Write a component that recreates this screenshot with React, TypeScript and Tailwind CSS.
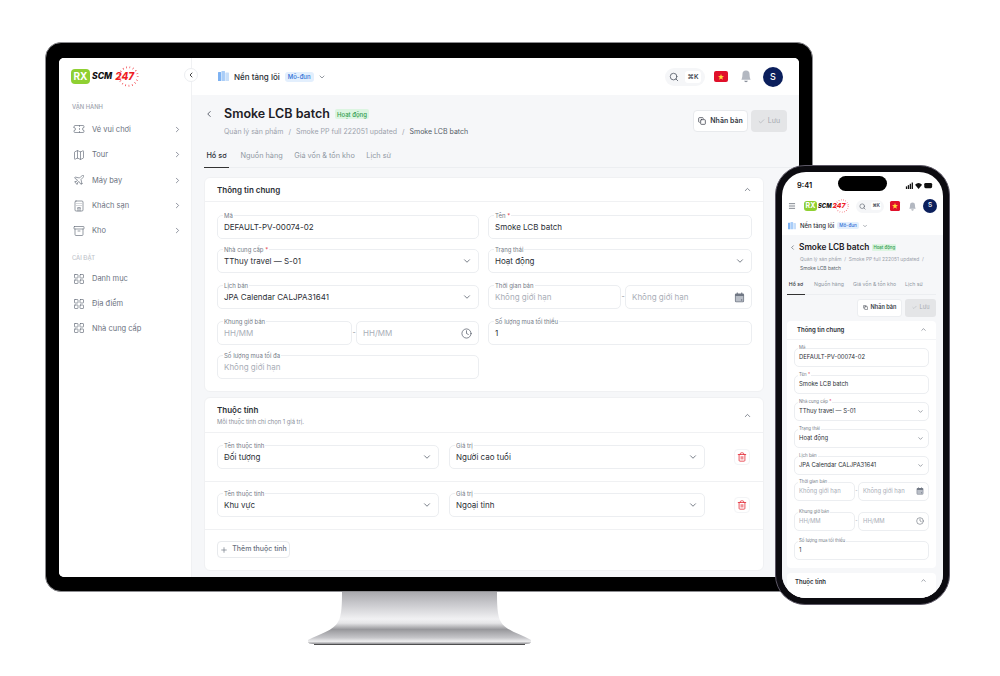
import { Archive, Check, ChevronDown, ChevronLeft, ChevronRight, ChevronUp, Clock, Copy, Hotel, LayoutGrid, Map, Menu, Plane, Plus, Search, Ticket, Trash2 } from "lucide-react";
import type { ReactNode } from "react";

const FONT = "font-['Inter','Liberation_Sans',sans-serif]";

function Logo({ small }: { small?: boolean }) {
  return (
    <div className={small ? "relative flex w-[43px] items-center gap-[1px]" : "relative flex w-[67px] items-center gap-[2px]"}>
      <span className={small ? "flex h-[10px] w-[13px] items-center justify-center rounded-[3px] bg-[#8fd032] text-[7px] font-bold text-white" : "flex h-[15px] w-[19px] items-center justify-center rounded-[4px] bg-[#8fd032] text-[10px] font-bold text-white"}>RX</span>
      <span className={small ? "text-[5.8px] font-extrabold italic text-[#111]" : "text-[8.6px] font-extrabold italic text-[#111]"}>SCM</span>
      <span className={small ? "text-[6.8px] font-extrabold italic text-[#ee1c25]" : "ml-[1px] text-[10px] font-extrabold italic text-[#ee1c25]"}>247</span>
      <svg viewBox="0 0 20 20" className={small ? "absolute right-[-2px] top-[-2px] h-[14px] w-[14px]" : "absolute right-[-1px] top-[-3px] h-[21px] w-[21px]"}>
        <circle cx="10" cy="10" r="8.8" fill="none" stroke="#ee1c25" strokeWidth="1.8" strokeDasharray="0.55 2.7" />
      </svg>
    </div>
  );
}

function Flag({ small }: { small?: boolean }) {
  return (
    <span className={small ? "flex h-[10px] w-[10px] items-center justify-center rounded-[1.5px] bg-[#e0102a]" : "flex h-[11px] w-[14px] items-center justify-center rounded-[2px] bg-[#e0102a]"}>
      <svg viewBox="0 0 10 10" className="h-[6px] w-[6px]"><path d="M5 0l1.3 3.4 3.7.2-2.9 2.3 1 3.6L5 7.5 1.9 9.5l1-3.6L0 3.6l3.7-.2z" fill="#ffd83a" /></svg>
    </span>
  );
}

function Bell({ className }: { className: string }) {
  return (
    <svg viewBox="0 0 18 24" className={className}>
      <path d="M9 1a6.5 6.5 0 0 0-6.5 6.5C2.5 15 0.5 18 0.5 18h17s-2-3-2-10.5A6.5 6.5 0 0 0 9 1z" fill="#b3b8c1" />
      <path d="M5.5 20a3.6 3.6 0 0 0 7 0z" fill="#8b919c" />
    </svg>
  );
}

function Folder({ className }: { className: string }) {
  return (
    <svg viewBox="0 0 12 12" className={className}>
      <rect x="0" y="1" width="3.4" height="10" rx="0.6" fill="#7eb2f2" />
      <rect x="3.8" y="0" width="3.8" height="11" rx="0.6" fill="#a9cdf8" />
      <rect x="8" y="1.5" width="4" height="9.5" rx="0.6" fill="#c7def9" />
    </svg>
  );
}

function CalendarFill({ className }: { className: string }) {
  return (
    <svg viewBox="0 0 12 12" className={className}>
      <rect x="1" y="1.6" width="10" height="9.6" rx="1.4" fill="#707784" />
      <rect x="1.8" y="4.4" width="8.4" height="6" fill="#b9bec7" />
      <rect x="3" y="0.6" width="1.2" height="2" fill="#707784" />
      <rect x="7.8" y="0.6" width="1.2" height="2" fill="#707784" />
      <rect x="7.6" y="8" width="1.4" height="1.4" fill="#707784" />
    </svg>
  );
}

function Field(props: { label: string; value?: string; placeholder?: boolean; required?: boolean; select?: boolean; small?: boolean; className?: string; children?: ReactNode }) {
  const { label, value, placeholder, required, select, small, className, children } = props;
  return (
    <div className={`relative flex items-center justify-between rounded-[5px] border border-[#eceef1] bg-white ${small ? "h-[19px] px-[4px]" : "h-6 px-[6px]"} ${className ?? ""}`}>
      {label && (
        <span className={small ? "absolute left-[3px] top-[-3.5px] bg-white px-[1px] text-[4.4px] leading-[6px] text-[#737a86]" : "absolute left-[5px] top-[-4px] bg-white px-[1px] text-[6px] leading-[7px] text-[#737a86]"}>
          {label}
          {required && <span className="text-[#e5343f]"> *</span>}
        </span>
      )}
      {value && <span className={`${small ? "text-[5.9px]" : "text-[8px]"} ${placeholder ? "text-[#a9aeb7]" : "text-[#2b2f36]"}`}>{value}</span>}
      {select && <ChevronDown className={small ? "h-[7px] w-[7px] text-[#5f6672]" : "h-[10px] w-[10px] text-[#5f6672]"} strokeWidth={2} />}
      {children}
    </div>
  );
}

function NavItem({ icon, label, more }: { icon: ReactNode; label: string; more?: boolean }) {
  return (
    <div className={`flex items-center gap-[7px] pl-[14px] pr-[9px] text-[7.5px] text-[#6b7280] ${more ? "h-[25.4px]" : "h-[24.8px]"}`}>
      {icon}
      <span className="flex-1">{label}</span>
      {more && <ChevronRight className="h-[9px] w-[9px] text-[#6b7280]" />}
    </div>
  );
}

const navIcon = "h-[12px] w-[12px] text-[#6b7280]";

function Sidebar() {
  return (
    <aside className="relative w-[133px] shrink-0 border-r border-[#f0f1f3] bg-white">
      <div className="pl-[12px] pt-[11px]"><Logo /></div>
      <div className="pl-[13px] pt-[19px] text-[5.8px] font-medium text-[#9ca2ac]">VẬN HÀNH</div>
      <div className="mt-[5px]">
        <NavItem more icon={<Ticket className={navIcon} strokeWidth={1.4} />} label="Vé vui chơi" />
        <NavItem more icon={<Map className={navIcon} strokeWidth={1.4} />} label="Tour" />
        <NavItem more icon={<Plane className={navIcon} strokeWidth={1.4} />} label="Máy bay" />
        <NavItem more icon={<Hotel className={navIcon} strokeWidth={1.4} />} label="Khách sạn" />
        <NavItem more icon={<Archive className={navIcon} strokeWidth={1.4} />} label="Kho" />
      </div>
      <div className="pl-[13px] pt-[10px] text-[5.8px] font-medium text-[#c0c4cb]">CÀI ĐẶT</div>
      <div className="mt-[4px]">
        <NavItem icon={<LayoutGrid className={navIcon} strokeWidth={1.4} />} label="Danh mục" />
        <NavItem icon={<LayoutGrid className={navIcon} strokeWidth={1.4} />} label="Địa điểm" />
        <NavItem icon={<LayoutGrid className={navIcon} strokeWidth={1.4} />} label="Nhà cung cấp" />
      </div>
      <div className="absolute right-[-7px] top-[10px] flex h-[14px] w-[14px] items-center justify-center rounded-full border border-[#eceef1] bg-white">
        <ChevronLeft className="h-[8px] w-[8px] text-[#222]" strokeWidth={2.5} />
      </div>
    </aside>
  );
}

function DesktopHeader() {
  return (
    <header className="flex h-[37px] items-center justify-between bg-white pl-[26px] pr-[16px]">
      <div className="flex items-center">
        <Folder className="h-[11px] w-[11px]" />
        <span className="ml-[5px] text-[8px] font-medium text-[#2b2f36]">Nền tảng lõi</span>
        <span className="ml-[5px] rounded-[3px] bg-[#e3effd] px-[3px] py-[1px] text-[6px] font-medium leading-[8px] text-[#2f6fd6]">Mô-đun</span>
        <ChevronDown className="ml-[4px] h-[8px] w-[8px] text-[#5f6672]" />
      </div>
      <div className="flex items-center">
        <div className="flex h-[18px] w-[40px] items-center justify-between rounded-full bg-[#f5f6f8] pl-[4px] pr-[4px]">
          <Search className="h-[10px] w-[10px] text-[#555c68]" />
          <span className="w-[16px] rounded-[3px] bg-white text-center text-[6.5px] font-semibold leading-[12px] text-[#3c424d]">⌘K</span>
        </div>
        <div className="ml-[9px]"><Flag /></div>
        <Bell className="ml-[13px] h-[13px] w-[10px]" />
        <span className="ml-[12px] flex h-5 w-5 items-center justify-center rounded-full bg-[#0b1f5c] text-[9px] font-medium text-white">S</span>
      </div>
    </header>
  );
}

function DesktopMain() {
  return (
    <main className="min-w-0 flex-1 overflow-hidden bg-[#f6f7f9] pl-[12px]">
      <div className="flex h-[50px] items-start justify-between pr-[12px] pt-[10px]">
        <div>
          <div className="flex h-[18px] items-center">
            <ChevronLeft className="h-[10px] w-[10px] text-[#444b57]" />
            <h1 className="ml-[10px] text-[12.5px] font-semibold text-[#1d2026]">Smoke LCB batch</h1>
            <span className="ml-[5px] rounded-[2px] bg-[#dcf5e1] px-[2px] py-[0.5px] text-[6px] font-medium leading-[9px] text-[#2f9a4c]">Hoạt động</span>
          </div>
          <div className="ml-[20px] mt-[3px] flex h-[12px] items-center gap-[5px] text-[7px] text-[#9ca2ac]">
            <span>Quản lý sản phẩm</span><span>/</span><span>Smoke PP full 222051 updated</span><span>/</span><span className="text-[#555c68]">Smoke LCB batch</span>
          </div>
        </div>
        <div className="mt-[5px] flex gap-[3px]">
          <div className="flex h-[22px] w-[55px] items-center justify-center gap-[4px] rounded-[4px] border border-[#e8eaed] bg-white text-[7px] font-semibold text-[#353a44]">
            <Copy className="h-[8px] w-[8px]" strokeWidth={2.2} />Nhân bản
          </div>
          <div className="flex h-[22px] w-[36px] items-center justify-center gap-[3px] rounded-[4px] bg-[#e4e5e7] text-[7px] text-[#a5a9b0]">
            <Check className="h-[7px] w-[7px]" />Lưu
          </div>
        </div>
      </div>
      <div className="flex h-[23px] gap-[11.5px] border-b border-[#eceef1] text-[7.3px] text-[#9098a3]">
        <span className="-mb-px flex h-[23px] w-[25px] items-center justify-center border-b border-[#333] font-medium text-[#2b2f36]">Hồ sơ</span>
        <span className="flex h-[22px] items-center">Nguồn hàng</span>
        <span className="flex h-[22px] items-center">Giá vốn &amp; tồn kho</span>
        <span className="flex h-[22px] items-center">Lịch sử</span>
      </div>

      <section className="mr-[35px] mt-[9px] rounded-[6px] border border-[#f0f1f3] bg-white">
        <div className="flex h-[24px] items-center justify-between border-b border-[#f0f1f3] pl-[12px] pr-[11px]">
          <span className="text-[8px] font-semibold text-[#2b2f36]">Thông tin chung</span>
          <ChevronUp className="h-[9px] w-[9px] text-[#5f6672]" />
        </div>
        <div className="grid grid-cols-[262px_1fr] grid-rows-[34px_36px_36px_34px_24px] gap-x-[9px] pb-[12px] pl-[12px] pr-[11px] pt-[13px]">
          <Field label="Mã" value="DEFAULT-PV-00074-02" />
          <Field label="Tên" required value="Smoke LCB batch" />
          <Field label="Nhà cung cấp" required value="TThuy travel — S-01" select />
          <Field label="Trạng thái" value="Hoạt động" select />
          <Field label="Lịch bán" value="JPA Calendar CALJPA31641" select />
          <div className="flex h-6 items-center">
            <Field label="Thời gian bán" value="Không giới hạn" placeholder className="w-[133px]" />
            <span className="w-[4px] text-center text-[7px] text-[#8a909a]">-</span>
            <Field label="" value="Không giới hạn" placeholder className="flex-1"><CalendarFill className="h-[11px] w-[11px]" /></Field>
          </div>
          <div className="flex h-6 items-center">
            <Field label="Khung giờ bán" value="HH/MM" placeholder className="w-[135px]" />
            <span className="w-[4px] text-center text-[7px] text-[#8a909a]">-</span>
            <Field label="" value="HH/MM" placeholder className="flex-1"><Clock className="h-[11px] w-[11px] text-[#555c68]" strokeWidth={1.6} /></Field>
          </div>
          <Field label="Số lượng mua tối thiểu" value="1" />
          <Field label="Số lượng mua tối đa" value="Không giới hạn" placeholder />
        </div>
      </section>

      <section className="mr-[35px] mt-[5px] rounded-[6px] border border-[#f0f1f3] bg-white">
        <div className="flex h-[35px] items-center justify-between border-b border-[#f0f1f3] pl-[12px] pr-[11px]">
          <div>
            <div className="text-[8px] font-semibold leading-[11px] text-[#2b2f36]">Thuộc tính</div>
            <div className="mt-[2px] text-[5.8px] leading-[8px] text-[#8a909a]">Mỗi thuộc tính chỉ chọn 1 giá trị.</div>
          </div>
          <ChevronUp className="h-[9px] w-[9px] text-[#5f6672]" />
        </div>
        {[["Đối tượng", "Người cao tuổi"], ["Khu vực", "Ngoại tỉnh"]].map(([name, val]) => (
          <div key={name} className="flex h-[48.5px] items-center border-b border-[#f0f1f3] pl-[12px] pr-[13px]">
            <Field label="Tên thuộc tính" value={name} select className="w-[222px]" />
            <Field label="Giá trị" value={val} select className="ml-[10px] w-[256px]" />
            <span className="ml-auto flex h-[16px] w-[16px] items-center justify-center rounded-[4px] border border-[#f3f4f6]">
              <Trash2 className="h-[10px] w-[10px] text-[#e5343f]" />
            </span>
          </div>
        ))}
        <div className="px-[12px] pb-[12px] pt-[11px]">
          <div className="flex h-[17px] w-[73px] items-center justify-center gap-[4px] rounded-[4px] border border-[#e8eaed] text-[7px] font-medium text-[#6b7280]">
            <Plus className="h-[8px] w-[8px]" />Thêm thuộc tính
          </div>
        </div>
      </section>
    </main>
  );
}

function Monitor() {
  return (
    <div className="absolute left-[45px] top-[42px] h-[550px] w-[768px] rounded-[16px] border border-[#8c8c90] bg-black px-[13px] pb-[14px] pt-[15px]">
      <div className="flex h-full overflow-hidden rounded-[5px] bg-white">
        <Sidebar />
        <div className="flex min-w-0 flex-1 flex-col">
          <DesktopHeader />
          <DesktopMain />
        </div>
      </div>
    </div>
  );
}

function Stand() {
  return (
    <svg viewBox="0 0 240 56" className="absolute left-[300px] top-[592px] h-[56px] w-[240px]">
      <defs>
        <linearGradient id="stand" x1="0" y1="0" x2="0" y2="1">
          <stop offset="0" stopColor="#a9a9ad" />
          <stop offset="0.2" stopColor="#c5c5c9" />
          <stop offset="0.52" stopColor="#f1f1f3" />
          <stop offset="0.6" stopColor="#e4e4e6" />
          <stop offset="0.72" stopColor="#97979b" />
          <stop offset="0.88" stopColor="#c6c6ca" />
          <stop offset="0.95" stopColor="#eeeeef" />
          <stop offset="1" stopColor="#8e8e92" />
        </linearGradient>
      </defs>
      <path d="M42 0H197C197 10 197 24 201 30C205 38 220 42 231 48V50C231 51 229 52 226 52H13C10 52 8 51 8 50V48C20 42 34 38 38 30C42 24 42 10 42 0Z" fill="url(#stand)" />
      <path d="M14 52.5H225" stroke="#222" strokeWidth="0.8" />
    </svg>
  );
}

function PhoneTopBar() {
  return (
    <>
      <div className="flex h-[24px] items-center justify-between pl-[15px] pr-[9px] pt-[3px]">
        <span className="text-[7.5px] font-semibold text-[#111]">9:41</span>
        <svg viewBox="0 0 30 8" className="h-[7px] w-[30px]">
          <rect x="0" y="5" width="1.5" height="3" fill="#111" /><rect x="2.2" y="3.6" width="1.5" height="4.4" fill="#111" /><rect x="4.4" y="2" width="1.5" height="6" fill="#111" /><rect x="6.6" y="0.6" width="1.5" height="7.4" fill="#111" />
          <path d="M10.5 3a6 6 0 0 1 8 0l-4 5z" fill="#111" />
          <rect x="21" y="1" width="9" height="6" rx="1.6" fill="#111" />
        </svg>
      </div>
      <div className="flex h-[20px] items-center pl-[6px] pr-[6px]">
        <Menu className="h-[8px] w-[8px] text-[#444b57]" />
        <div className="ml-[8px]"><Logo small /></div>
        <div className="ml-[9px] flex h-[13px] w-[28px] items-center justify-between rounded-full bg-[#f5f6f8] px-[3px]">
          <Search className="h-[7px] w-[7px] text-[#555c68]" />
          <span className="rounded-[2px] bg-white px-[1px] text-[4.5px] font-semibold leading-[8px] text-[#3c424d]">⌘K</span>
        </div>
        <div className="ml-[6px]"><Flag small /></div>
        <Bell className="ml-[9px] h-[9px] w-[7px]" />
        <span className="ml-auto flex h-[14px] w-[14px] items-center justify-center rounded-full bg-[#0b1f5c] text-[6.5px] font-medium text-white">S</span>
      </div>
      <div className="flex h-[19px] items-center pl-[6px]">
        <Folder className="h-[8px] w-[8px]" />
        <span className="ml-[4px] text-[6px] font-medium text-[#2b2f36]">Nền tảng lõi</span>
        <span className="ml-[3px] rounded-[2px] bg-[#e3effd] px-[2px] text-[4.6px] font-medium leading-[7px] text-[#2f6fd6]">Mô-đun</span>
        <ChevronDown className="ml-[3px] h-[6px] w-[6px] text-[#5f6672]" />
      </div>
    </>
  );
}

function PhoneMain() {
  return (
    <div className="flex-1 overflow-hidden bg-[#f6f7f9] pl-[5px] pr-[7px]">
      <div className="mt-[4px] flex h-[16px] items-center pl-[2px]">
        <ChevronLeft className="h-[7px] w-[7px] text-[#444b57]" />
        <span className="ml-[3px] text-[8.3px] font-semibold text-[#1d2026]">Smoke LCB batch</span>
        <span className="ml-[3px] rounded-[1px] bg-[#dcf5e1] px-[1px] text-[4.4px] font-medium leading-[7px] text-[#2f9a4c]">Hoạt động</span>
      </div>
      <div className="pl-[13px] text-[4.9px] leading-[9px] text-[#9ca2ac]">
        <div>Quản lý sản phẩm &nbsp;/&nbsp; Smoke PP full 222051 updated &nbsp;/</div>
        <div className="text-[#555c68]">Smoke LCB batch</div>
      </div>
      <div className="mt-[3.5px] flex h-[18px] gap-[9px] border-b border-[#eceef1] text-[5.2px] text-[#9098a3]">
        <span className="-mb-px flex h-[18px] w-[18px] items-center justify-center border-b border-[#333] font-medium text-[#2b2f36]">Hồ sơ</span>
        <span className="flex h-[17px] items-center">Nguồn hàng</span>
        <span className="flex h-[17px] items-center">Giá vốn &amp; tồn kho</span>
        <span className="flex h-[17px] items-center">Lịch sử</span>
      </div>
      <div className="mt-[4px] flex justify-end gap-[3px]">
        <div className="flex h-[18px] w-[45px] items-center justify-center gap-[3px] rounded-[3px] border border-[#eceef1] bg-white text-[5.6px] font-semibold text-[#353a44]">
          <Copy className="h-[5px] w-[5px]" strokeWidth={2.4} />Nhân bản
        </div>
        <div className="flex h-[18px] w-[31px] items-center justify-center gap-[3px] rounded-[3px] bg-[#e4e5e7] text-[5.6px] text-[#a5a9b0]">
          <Check className="h-[5px] w-[5px]" />Lưu
        </div>
      </div>
      <section className="mt-[4px] rounded-[4px] bg-white">
        <div className="flex h-[19px] items-center justify-between border-b border-[#f3f4f6] pl-[10px] pr-[9px]">
          <span className="text-[6px] font-semibold text-[#2b2f36]">Thông tin chung</span>
          <ChevronUp className="h-[7px] w-[7px] text-[#5f6672]" />
        </div>
        <div className="flex flex-col gap-[8px] px-[7px] pb-[8px] pt-[8px]">
          <Field small label="Mã" value="DEFAULT-PV-00074-02" />
          <Field small label="Tên" required value="Smoke LCB batch" />
          <Field small label="Nhà cung cấp" required value="TThuy travel — S-01" select />
          <Field small label="Trạng thái" value="Hoạt động" select />
          <Field small label="Lịch bán" value="JPA Calendar CALJPA31641" select />
          <div className="-mt-px flex items-center">
            <Field small label="Thời gian bán" value="Không giới hạn" placeholder className="w-[61px]" />
            <span className="w-[3px] text-center text-[5px] text-[#8a909a]">-</span>
            <Field small label="" value="Không giới hạn" placeholder className="flex-1"><CalendarFill className="h-[8px] w-[8px]" /></Field>
          </div>
          <div className="mt-[3px] flex items-center">
            <Field small label="Khung giờ bán" value="HH/MM" placeholder className="w-[61px]" />
            <span className="w-[3px] text-center text-[5px] text-[#8a909a]">-</span>
            <Field small label="" value="HH/MM" placeholder className="flex-1"><Clock className="h-[8px] w-[8px] text-[#555c68]" strokeWidth={1.6} /></Field>
          </div>
          <Field small label="Số lượng mua tối thiểu" value="1" className="mt-[2px]" />
        </div>
      </section>
      <section className="mt-[5px] flex h-[30px] items-start justify-between rounded-[4px] bg-white pl-[8px] pr-[9px] pt-[4px]">
        <span className="text-[6px] font-semibold text-[#2b2f36]">Thuộc tính</span>
        <ChevronUp className="h-[7px] w-[7px] text-[#5f6672]" />
      </section>
    </div>
  );
}

function Phone() {
  return (
    <div className="absolute left-[775px] top-[165px] h-[440px] w-[175px] rounded-[30px] border-[1.5px] border-[#5d5866] bg-[#0c0b10] p-[6px]">
      <div className="relative flex h-full flex-col overflow-hidden rounded-[24px] bg-white">
        <PhoneTopBar />
        <PhoneMain />
        <div className="absolute left-[56px] top-[4px] h-[15px] w-[49px] rounded-full bg-black" />
      </div>
    </div>
  );
}

export default function App() {
  return (
    <div className={`relative h-[676px] w-[1000px] overflow-hidden bg-white ${FONT}`}>
      <Stand />
      <Monitor />
      <Phone />
    </div>
  );
}
